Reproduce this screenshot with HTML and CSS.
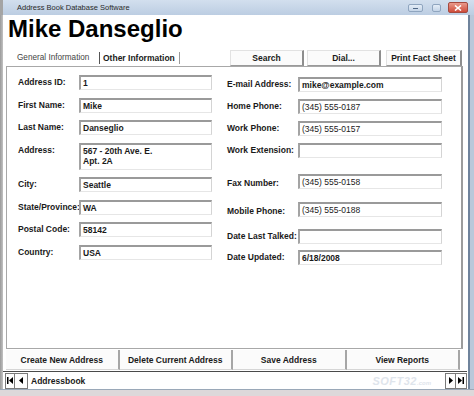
FILE: index.html
```html
<!DOCTYPE html>
<html lang="en">
<head>
  <meta charset="utf-8">
  <title>Address Book Database Software</title>
  <link rel="stylesheet" href="styles.css">
</head>
<body>
  <div class="window">
    <div class="titlebar">
      <span class="title">Address Book Database Software</span>
      <div class="controls">
        <span class="ctl ctl-min"></span>
        <span class="ctl ctl-max"></span>
        <span class="ctl ctl-close">
          <svg width="8" height="6" viewBox="0 0 8 6"><path d="M1 0.5 L7 5.5 M7 0.5 L1 5.5" stroke="#fff" stroke-width="1.6"/></svg>
        </span>
      </div>
    </div>

    <div class="frame">
      <div class="edge-left"></div>
      <div class="client">
        <h1 class="name">Mike Danseglio</h1>

        <!-- tabs + top buttons -->
        <div class="toolbar">
          <div class="tabs">
            <span class="tab tab-general">General Information</span>
            <span class="tab tab-other">Other Information</span>
          </div>
          <div class="tools">
            <button class="btn btn-search">Search</button>
            <button class="btn btn-dial">Dial...</button>
            <button class="btn btn-print">Print Fact Sheet</button>
          </div>
        </div>

        <!-- form -->
        <div class="panel">
          <div class="col col-left">
            <div class="row"><span class="label">Address ID:</span><span class="field">1</span></div>
            <div class="row"><span class="label">First Name:</span><span class="field">Mike</span></div>
            <div class="row"><span class="label">Last Name:</span><span class="field">Danseglio</span></div>
            <div class="row row-tall"><span class="label">Address:</span><span class="field field-multi">567 - 20th Ave. E.<br>Apt. 2A</span></div>
            <div class="row"><span class="label">City:</span><span class="field">Seattle</span></div>
            <div class="row"><span class="label">State/Province:</span><span class="field">WA</span></div>
            <div class="row"><span class="label">Postal Code:</span><span class="field">58142</span></div>
            <div class="row"><span class="label">Country:</span><span class="field">USA</span></div>
          </div>
          <div class="col col-right">
            <div class="row"><span class="label">E-mail Address:</span><span class="field">mike@example.com</span></div>
            <div class="row"><span class="label">Home Phone:</span><span class="field field-plain">(345) 555-0187</span></div>
            <div class="row"><span class="label">Work Phone:</span><span class="field field-plain">(345) 555-0157</span></div>
            <div class="row"><span class="label">Work Extension:</span><span class="field"></span></div>
            <div class="row gap-lg"><span class="label label-low">Fax Number:</span><span class="field field-plain">(345) 555-0158</span></div>
            <div class="row gap-md"><span class="label label-low">Mobile Phone:</span><span class="field field-plain">(345) 555-0188</span></div>
            <div class="row gap-md"><span class="label">Date Last Talked:</span><span class="field"></span></div>
            <div class="row gap-sm"><span class="label">Date Updated:</span><span class="field">6/18/2008</span></div>
          </div>
        </div>

        <!-- bottom buttons -->
        <div class="actions">
          <button class="action">Create New Address</button>
          <button class="action">Delete Current Address</button>
          <button class="action">Save Address</button>
          <button class="action">View Reports</button>
        </div>

        <!-- record navigation -->
        <div class="nav">
          <span class="navbtn navbtn-first">
            <svg width="8" height="7" viewBox="0 0 8 7"><rect x="1" y="0" width="1.5" height="7" fill="#000"/><path d="M7 0 L3 3.5 L7 7 Z" fill="#000"/></svg>
          </span>
          <span class="navbtn navbtn-prev">
            <svg width="6" height="7" viewBox="0 0 6 7"><path d="M5 0 L1 3.5 L5 7 Z" fill="#000"/></svg>
          </span>
          <span class="recordset">Addressbook</span>
          <span class="watermark">SOFT32<small>.com</small></span>
          <span class="navbtn navbtn-next">
            <svg width="6" height="7" viewBox="0 0 6 7"><path d="M1 0 L5 3.5 L1 7 Z" fill="#000"/></svg>
          </span>
          <span class="navbtn navbtn-last">
            <svg width="8" height="7" viewBox="0 0 8 7"><path d="M1 0 L5 3.5 L1 7 Z" fill="#000"/><rect x="5.5" y="0" width="1.5" height="7" fill="#000"/></svg>
          </span>
        </div>
      </div>
      <div class="edge-right"></div>
    </div>
    <div class="frame-bottom"></div>
  </div>
</body>
</html>
```

FILE: styles.css
```css
body {
  margin: 0;
  padding: 0;
  background: #fff;
  font-family: 'Liberation Sans', Arial, sans-serif;
}

.window {
  width: 474px;
  height: 396px;
  display: flex;
  flex-direction: column;
  overflow: hidden;
}

/* -------------- title bar -------------- */
.titlebar {
  height: 15px;
  flex: none;
  display: flex;
  align-items: center;
  background: linear-gradient(#d2dfee, #bccde2);
  border-left: 3px solid #a4a4a4;
  box-sizing: border-box;
  padding-left: 14px;
}

.title {
  font-size: 7.5px;
  color: #2a2a2a;
}

.controls {
  margin-left: auto;
  display: flex;
  align-items: center;
  gap: 0;
  margin-right: 6px;
}

.ctl {
  display: block;
  box-sizing: border-box;
  border: 1px solid #8fa5bf;
  border-radius: 2px;
  background: linear-gradient(#e4edf7, #c4d4e7);
}

.ctl-min {
  width: 15px;
  height: 8px;
  position: relative;
}
.ctl-min::after {
  content: "";
  position: absolute;
  left: 4px;
  top: 3px;
  width: 5px;
  height: 1px;
  background: #4f6785;
}

.ctl-max {
  width: 9px;
  height: 8px;
  margin-left: 9px;
}

.ctl-close {
  width: 20px;
  height: 11px;
  margin-left: 7px;
  border-color: #a4493f;
  background: linear-gradient(#e99a8c, #cf4b3a);
  display: flex;
  align-items: center;
  justify-content: center;
}

/* -------------- frame -------------- */
.frame {
  flex: 1;
  display: flex;
  min-height: 0;
}

.edge-left {
  width: 3px;
  flex: none;
  background: linear-gradient(to right, #9a9a9a, #c2c2c2);
}

.edge-right {
  width: 7px;
  flex: none;
  background: linear-gradient(to right, #fff 0, #fff 1px, #6f839c 1px, #6f839c 3px, #b9c8da 3px);
}

.frame-bottom {
  height: 7px;
  flex: none;
  background: linear-gradient(#9aa8b8 0, #9aa8b8 1px, #ddd8da 1px);
}

.client {
  flex: 1;
  display: flex;
  flex-direction: column;
  background: #fff;
  font-size: 8.5px;
  color: #1a1a1a;
}

.name {
  margin: 2px 0 0 5px;
  font-size: 24px;
  line-height: 24px;
  font-weight: bold;
  color: #000;
}

/* -------------- tabs + buttons -------------- */
.toolbar {
  margin-top: 9px;
  height: 16px;
  display: flex;
  align-items: stretch;
}

.tabs {
  display: flex;
  align-items: center;
  margin-left: 5px;
}

.tab {
  box-sizing: border-box;
  height: 12px;
  line-height: 12px;
  font-size: 8.2px;
  white-space: nowrap;
}

.tab-general {
  width: 92px;
  padding-left: 9px;
  color: #444;
  border-right: 1px solid #555;
}

.tab-other {
  width: 80px;
  padding-left: 3px;
  font-weight: bold;
  font-size: 8.5px;
  border-right: 1px solid #9a9a9a;
}

.tools {
  margin-left: auto;
  margin-right: 5px;
  display: flex;
}

.btn,
.action {
  font-family: 'Liberation Sans', Arial, sans-serif;
  font-size: 8.5px;
  font-weight: bold;
  color: #1a1a1a;
  background: #fbfbfb;
  padding: 0;
  margin: 0;
  white-space: nowrap;
}

.btn {
  height: 16px;
  border-top: 1px solid #e2e2e2;
  border-left: 1px solid #e2e2e2;
  border-right: 2px solid #8e8e8e;
  border-bottom: 1px solid #9a9a9a;
}

.btn-search { width: 74px; }
.btn-dial { width: 74px; margin-left: 3px; }
.btn-print { width: 76px; margin-left: 5px; }

/* -------------- form panel -------------- */
.panel {
  height: 283px;
  box-sizing: border-box;
  margin: 0 4px 0 3px;
  border: 1px solid #a8a8a8;
  border-right: 2px solid #9c9c9c;
  display: flex;
}

.col {
  display: flex;
  flex-direction: column;
}

.col-left {
  padding: 8px 0 0 11px;
}
.col-left .row + .row {
  margin-top: 7.5px;
}

.col-right {
  padding-top: 10px;
  margin-left: 15px;
}
.col-right .row + .row {
  margin-top: 7px;
}
.col-right .row.gap-lg { margin-top: 16px; }
.col-right .row.gap-md { margin-top: 10.5px; }
.col-right .row.gap-sm { margin-top: 6px; }

.row {
  display: flex;
  align-items: flex-start;
}

.label {
  font-weight: bold;
  line-height: 15px;
  white-space: nowrap;
}

.label-low {
  padding-top: 2px;
}

.col-left .label { width: 61px; }
.col-right .label { width: 71px; }

.field {
  display: block;
  box-sizing: border-box;
  height: 15px;
  padding: 0 2px;
  line-height: 12px;
  font-weight: bold;
  background: #fff;
  border-top: 2px solid #9a9a9a;
  border-left: 2px solid #a4a4a4;
  border-right: 1px solid #d4d4d4;
  border-bottom: 1px solid #e6e6e6;
  white-space: nowrap;
}

.col-left .field { width: 133px; }
.col-right .field { width: 144px; }

.field-multi {
  height: 27px;
  line-height: 10px;
  padding-top: 1px;
}

.field-plain {
  font-weight: normal;
  color: #222;
}

/* -------------- bottom buttons -------------- */
.actions {
  height: 22px;
  margin: 0 7px 0 3px;
  display: flex;
  align-items: stretch;
}

.action {
  flex: 1;
  height: 20px;
  margin-top: 1px;
  border: none;
  border-right: 2px solid #a6a6a6;
  border-bottom: 1px solid #d6d6d6;
}

/* -------------- record navigation -------------- */
.nav {
  height: 18px;
  box-sizing: border-box;
  border-top: 1px solid #4a4a4a;
  display: flex;
  align-items: center;
}

.navbtn {
  box-sizing: border-box;
  height: 16px;
  display: flex;
  align-items: center;
  justify-content: center;
  border: 1px solid #7a7a7a;
  background: #fdfdfd;
}

.navbtn-first { width: 10px; margin-left: 2px; }
.navbtn-prev { width: 13px; border-left: none; }
.navbtn-next { width: 11px; }
.navbtn-last { width: 11px; border-left: none; }

.recordset {
  margin-left: 3px;
  font-weight: bold;
}

.watermark {
  margin-left: auto;
  margin-right: 14px;
  font-size: 11px;
  font-weight: bold;
  font-style: italic;
  color: #dfe5ec;
  letter-spacing: 0.5px;
}
.watermark small {
  font-size: 6px;
  letter-spacing: 0;
}
```
